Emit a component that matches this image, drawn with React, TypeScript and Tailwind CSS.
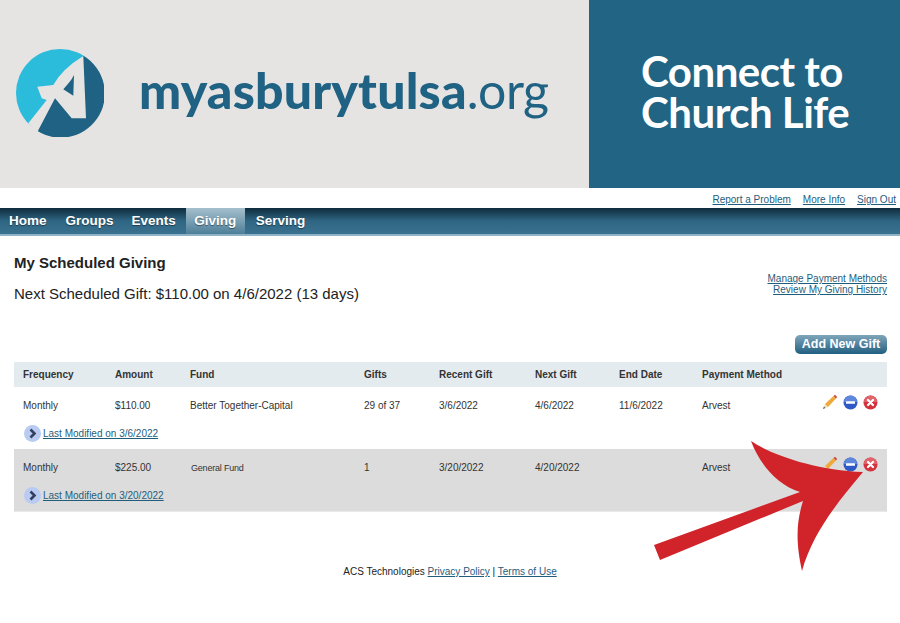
const cols = "grid grid-cols-[92px_75px_174px_75px_96px_84px_83px_1fr] pl-[9px]";

function Pencil() {
  return (
    <svg width="16" height="16" viewBox="0 0 16 16">
      <path d="M1 15 L3 10 L6 13 Z" fill="#f3dfb8" />
      <path d="M3 10 L11.5 2 L14 4.5 L6 13 Z" fill="#eda93a" />
      <path d="M11.5 2 L13 0.7 L15.2 3 L14 4.5 Z" fill="#c9483f" />
      <path d="M1 15 L2 12.6 L3.4 14 Z" fill="#555" />
    </svg>
  );
}

function Minus() {
  return (
    <svg width="15" height="15" viewBox="0 0 15 15">
      <circle cx="7.5" cy="7.5" r="7" fill="#2f59c4" />
      <path d="M1 7 A6.5 6.5 0 0 1 14 7 Z" fill="#5f88dd" />
      <rect x="3" y="6.2" width="9" height="2.6" rx="0.6" fill="#fff" />
    </svg>
  );
}

function Close() {
  return (
    <svg width="15" height="15" viewBox="0 0 15 15">
      <circle cx="7.5" cy="7.5" r="7" fill="#d2333c" />
      <path d="M1 7 A6.5 6.5 0 0 1 14 7 Z" fill="#e0646a" />
      <path d="M5 5 L10 10 M10 5 L5 10" stroke="#fff" strokeWidth="2.2" strokeLinecap="round" />
    </svg>
  );
}

function Chevron() {
  return (
    <svg width="17" height="17" viewBox="0 0 17 17" className="shrink-0">
      <circle cx="8.5" cy="8.5" r="8.5" fill="#b9cbf2" />
      <path d="M6.5 4.5 L10.5 8.5 L6.5 12.5" fill="none" stroke="#33405f" strokeWidth="2.6" />
    </svg>
  );
}

function Row({ values, modified, shaded, fundClass }: { values: string[]; modified: string; shaded?: boolean; fundClass?: string }) {
  return (
    <div className={`relative h-[62px] ${shaded ? "bg-[#dcdcdc]" : "bg-white"}`}>
      <div className={`${cols} h-[25px] items-start pt-[13px] text-[10px] leading-[12px] text-[#333]`}>
        {values.map((v, i) => (
          <div key={i} className={i === 2 ? fundClass : ""}>{v}</div>
        ))}
      </div>
      <div className="absolute right-[9px] top-[7px] flex items-center gap-[5px]">
        <Pencil />
        <Minus />
        <Close />
      </div>
      <div className="mt-[13px] flex items-center gap-[2px] pl-[10px]">
        <Chevron />
        <a className="text-[10px] leading-[12px] text-[#1f5d7d] underline">{modified}</a>
      </div>
    </div>
  );
}

export default function App() {
  const logoFont = { fontFamily: "Lato, sans-serif" };
  return (
    <div className="relative h-[623px] w-[900px] overflow-hidden bg-white font-['Liberation_Sans',Arial,sans-serif] text-[#222]">
      <div className="flex h-[188px]">
        <div className="flex w-[589px] items-center bg-[#e5e4e2] pl-[16px]">
          <svg width="88" height="88" viewBox="0 0 88 88" className="mt-[-2px] shrink-0">
            <circle cx="44" cy="44" r="44" fill="#2bbbdb" />
            <path d="M67.3 6.8 A44 44 0 1 1 18 79.5 Z" fill="#1f6283" />
            <path d="M67.3 7 L70 69.3 L55.7 69.3 L39 49.3 L20.7 84.3 L12.3 74.3 L30.7 51 L25.7 49.3 L21.3 37.7 L37.3 36 Q46 20 67.3 7 Z" fill="#e5e4e2" />
            <path d="M58 26 L57.3 46.7 L47.3 40.3 C51 36 55 32 58 26 Z" fill="#1f6283" />
          </svg>
          <div className="ml-[35px] mt-[-9px] text-[50px] leading-none text-[#1f6283]" style={logoFont}>
            <span className="font-black tracking-[0.2px]">myasburytulsa</span>
            <span className="font-normal tracking-[-0.5px]">.org</span>
          </div>
        </div>
        <div className="flex flex-1 items-center bg-[#216484] pl-[52px]">
          <div className="mt-[-4px] text-[42px] font-bold leading-[41px] tracking-[-0.5px] text-white" style={logoFont}>
            <div>Connect to</div>
            <div>Church Life</div>
          </div>
        </div>
      </div>

      <div className="flex h-[20px] items-center justify-end gap-[12px] pr-[4px] pt-[3px] text-[10px] text-[#1f5d7d]">
        <a className="underline">Report a Problem</a>
        <a className="underline">More Info</a>
        <a className="underline">Sign Out</a>
      </div>

      <nav className="flex h-[28px] border-b-2 border-b-[#8fb3c6] bg-gradient-to-b from-[#0f2c3d] via-[#2f6684] to-[#3a718e] text-[13.5px] font-bold leading-[25px] text-white [text-shadow:0_1px_1px_rgba(0,0,0,0.45)]">
        <div className="ml-[9px]">Home</div>
        <div className="ml-[19px]">Groups</div>
        <div className="ml-[18px]">Events</div>
        <div className="ml-[10px] flex w-[59px] justify-center bg-gradient-to-b from-[#a5c0cd] to-[#4d7f99]">Giving</div>
        <div className="ml-[11px]">Serving</div>
      </nav>

      <div className="flex justify-between pl-[14px] pr-[13px] pt-[18px]">
        <div>
          <h1 className="text-[15px] font-bold leading-[18px] text-[#222]">My Scheduled Giving</h1>
          <p className="mt-[13px] text-[15px] leading-[18px] text-[#222]">Next Scheduled Gift: $110.00 on 4/6/2022 (13 days)</p>
        </div>
        <div className="mt-[19px] flex flex-col items-end text-[10px] leading-[11px] text-[#1f5d7d]">
          <a className="underline">Manage Payment Methods</a>
          <a className="underline">Review My Giving History</a>
        </div>
      </div>

      <div className="mt-[32px] flex justify-end pr-[13px]">
        <button className="h-[19px] w-[92px] rounded-[5px] bg-gradient-to-b from-[#7fa6bb] to-[#1f5f80] text-[12.5px] font-bold leading-[19px] text-white">
          Add New Gift
        </button>
      </div>

      <div className="mx-[14px] mt-[8px] w-[873px]">
        <div className={`${cols} h-[25px] items-center bg-[#e4ebef] text-[10px] font-bold text-[#333]`}>
          <div>Frequency</div>
          <div>Amount</div>
          <div>Fund</div>
          <div>Gifts</div>
          <div>Recent Gift</div>
          <div>Next Gift</div>
          <div>End Date</div>
          <div>Payment Method</div>
        </div>
        <Row
          values={["Monthly", "$110.00", "Better Together-Capital", "29 of 37", "3/6/2022", "4/6/2022", "11/6/2022", "Arvest"]}
          modified="Last Modified on 3/6/2022"
        />
        <Row
          shaded
          values={["Monthly", "$225.00", "General Fund", "1", "3/20/2022", "4/20/2022", "", "Arvest"]}
          fundClass="ml-px text-[9px] tracking-[-0.2px]"
          modified="Last Modified on 3/20/2022"
        />
        <div className="h-px bg-[#e9e9e9]" />
      </div>

      <footer className="mt-[54px] text-center text-[10px] leading-[12px] text-[#222]">
        ACS Technologies <a className="text-[#1f5d7d] underline">Privacy Policy</a> | <a className="text-[#1f5d7d] underline">Terms of Use</a>
      </footer>

      <svg className="absolute left-0 top-0" width="900" height="623" viewBox="0 0 900 623">
        <path d="M751 441 C772 455 815 470 863 472 C835 505 812 535 802 571 C795 540 797 520 803 501 L660 560 L654 545 L800 492 C778 485 760 465 751 441 Z" fill="#d1232a" />
      </svg>
    </div>
  );
}
